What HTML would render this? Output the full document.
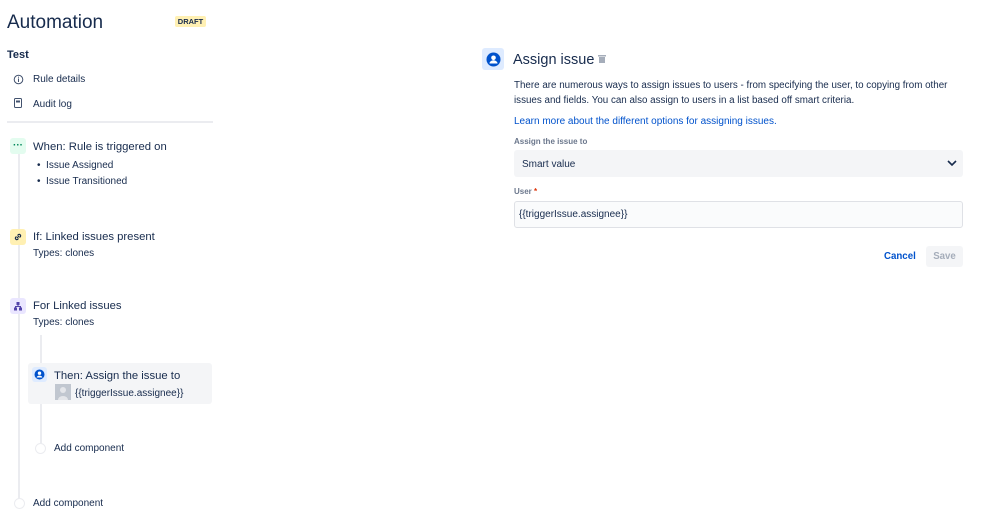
<!DOCTYPE html><html><head><style>
body{margin:0;width:999px;height:527px;background:#fff;font-family:"Liberation Sans",sans-serif;color:#172b4d;position:relative;overflow:hidden}
.a{position:absolute;white-space:nowrap}
.t{font-size:11.3px}
.s{font-size:10px}
.ib{position:absolute;width:16px;height:16px;border-radius:3px;display:flex;align-items:center;justify-content:center}
</style></head><body>
<div class="a" style="left:7px;top:12px;font-size:19px">Automation</div>
<div class="a" style="left:175px;top:16px;width:31px;height:11px;background:#fff0b3;border-radius:2px;font-size:7.5px;font-weight:bold;text-align:center;line-height:11px;color:#172b4d">DRAFT</div>
<div class="a" style="left:7px;top:49px;font-size:11px;font-weight:bold">Test</div>
<svg class="a" style="left:13px;top:74px" width="11" height="11"><circle cx="5.5" cy="5.5" r="4.3" fill="none" stroke="#42526e" stroke-width="1"/><rect x="5" y="4.5" width="1" height="3.5" fill="#42526e"/><rect x="5" y="2.7" width="1" height="1" fill="#42526e"/></svg>
<div class="a s" style="left:33px;top:74px">Rule details</div>
<svg class="a" style="left:14px;top:98px" width="9" height="11"><rect x="0.5" y="0.5" width="7" height="9" rx="1" fill="none" stroke="#42526e"/><rect x="2" y="2.5" width="4" height="2" fill="#42526e"/></svg>
<div class="a s" style="left:33px;top:99px">Audit log</div>
<div class="a" style="left:7px;top:121px;width:206px;height:2px;background:#ebecf0"></div>
<div class="a" style="left:18px;top:154px;width:2px;height:345px;background:#ebecf0"></div>
<div class="ib" style="left:10px;top:138px;background:#e3fcef;color:#00875a;font-size:10px;font-weight:bold;line-height:8px">···</div>
<div class="a t" style="left:33px;top:141px">When: Rule is triggered on</div>
<div class="a s" style="left:37px;top:160px">•&nbsp;&nbsp;Issue Assigned</div>
<div class="a s" style="left:37px;top:176px">•&nbsp;&nbsp;Issue Transitioned</div>
<div class="ib" style="left:10px;top:229px;background:#fff0b3"><svg width="10" height="10"><path d="M4 6l2-2M3.5 4.5l-1 1a1.5 1.5 0 002 2l1-1M6.5 5.5l1-1a1.5 1.5 0 00-2-2l-1 1" stroke="#172b4d" stroke-width="1.2" fill="none"/></svg></div>
<div class="a t" style="left:33px;top:231px">If: Linked issues present</div>
<div class="a s" style="left:33px;top:248px">Types: clones</div>
<div class="ib" style="left:10px;top:298px;background:#eae6ff"><svg width="10" height="10"><rect x="3.5" y="1" width="3" height="3" fill="#5243aa"/><rect x="1" y="6.5" width="3" height="3" fill="#5243aa"/><rect x="6" y="6.5" width="3" height="3" fill="#5243aa"/><path d="M5 4v1.5M2.5 6.5V5.5h5v1" stroke="#5243aa" fill="none"/></svg></div>
<div class="a t" style="left:33px;top:300px">For Linked issues</div>
<div class="a s" style="left:33px;top:317px">Types: clones</div>
<div class="a" style="left:40px;top:335px;width:2px;height:110px;background:#ebecf0"></div>
<div class="a" style="left:28px;top:363px;width:184px;height:41px;background:#f4f5f7;border-radius:3px"></div>
<div class="ib" style="left:32px;top:367px;width:15px;height:15px;background:#deebff"><svg width="11" height="11"><circle cx="5.5" cy="5.5" r="5" fill="#0052cc"/><circle cx="5.5" cy="4.2" r="1.7" fill="#fff"/><path d="M2.6 8.5a3 2.5 0 015.8 0" fill="#fff"/></svg></div>
<div class="a t" style="left:54px;top:370px">Then: Assign the issue to</div>
<div class="a" style="left:55px;top:384px;width:16px;height:16px;background:#c1c7d0"><svg width="16" height="16"><circle cx="8" cy="6" r="3" fill="#e4e6ea"/><path d="M3 16a5 4 0 0110 0" fill="#e4e6ea"/></svg></div>
<div class="a s" style="left:75px;top:388px">{{triggerIssue.assignee}}</div>
<div class="a" style="left:35px;top:443px;width:9px;height:9px;border:1px solid #ebecf0;border-radius:50%;background:#fff"></div>
<div class="a s" style="left:54px;top:443px">Add component</div>
<div class="a" style="left:14px;top:498px;width:9px;height:9px;border:1px solid #ebecf0;border-radius:50%;background:#fff"></div>
<div class="a s" style="left:33px;top:498px">Add component</div>

<div class="a" style="left:482px;top:48px;width:22px;height:22px;background:#deebff;border-radius:3px;display:flex;align-items:center;justify-content:center"><svg width="15" height="15"><circle cx="7.5" cy="7.5" r="7" fill="#0052cc"/><circle cx="7.5" cy="5.8" r="2.3" fill="#fff"/><path d="M3.5 11.5a4 3.2 0 018 0z" fill="#fff"/></svg></div>
<div class="a" style="left:513px;top:52px;font-size:14.5px;font-weight:500;color:#172b4d">Assign issue</div>
<svg class="a" style="left:598px;top:54px" width="8" height="9"><rect x="0" y="1" width="8" height="1.5" fill="#a5adba"/><rect x="1" y="3" width="6" height="6" fill="#a5adba"/></svg>
<div class="a" style="left:514px;top:79px;font-size:9.8px;line-height:14.5px;color:#172b4d">There are numerous ways to assign issues to users - from specifying the user, to copying from other<br>issues and fields. You can also assign to users in a list based off smart criteria.</div>
<div class="a" style="left:514px;top:116px;font-size:10px;color:#0052cc">Learn more about the different options for assigning issues.</div>
<div class="a" style="left:514px;top:137px;font-size:8px;font-weight:bold;color:#6b778c">Assign the issue to</div>
<div class="a" style="left:514px;top:150px;width:449px;height:27px;background:#f4f5f7;border-radius:3px"></div>
<div class="a s" style="left:522px;top:159px">Smart value</div>
<svg class="a" style="left:947px;top:160px" width="10" height="7"><path d="M1 1l4 4 4-4" stroke="#172b4d" stroke-width="1.6" fill="none"/></svg>
<div class="a" style="left:514px;top:187px;font-size:8px;font-weight:bold;color:#6b778c">User <span style="color:#de350b">*</span></div>
<div class="a" style="left:514px;top:201px;width:447px;height:25px;background:#fafbfc;border:1px solid #dfe1e6;border-radius:3px"></div>
<div class="a s" style="left:519px;top:209px">{{triggerIssue.assignee}}</div>
<div class="a" style="left:884px;top:251px;font-size:9.7px;font-weight:bold;color:#0052cc">Cancel</div>
<div class="a" style="left:926px;top:246px;width:37px;height:21px;background:#f4f5f7;border-radius:3px;font-size:9.7px;font-weight:bold;color:#a5adba;text-align:center;line-height:21px">Save</div>
</body></html>
